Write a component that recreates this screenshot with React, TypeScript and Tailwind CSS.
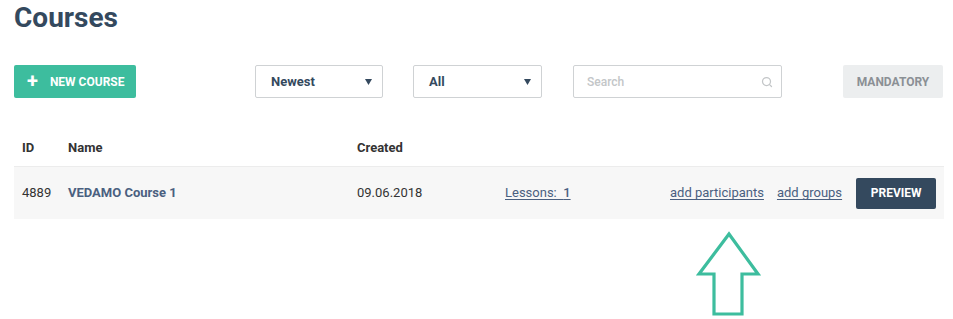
import { Search } from "lucide-react";

const Caret = () => (
  <svg width="7" height="6" viewBox="0 0 7 6" className="shrink-0">
    <path d="M0 0 H7 L3.5 6 Z" fill="#34495e" />
  </svg>
);

const Select = ({ label, width }: { label: string; width: string }) => (
  <div
    className={`${width} h-[33px] shrink-0 flex items-center justify-between pl-[15px] pr-[10px] border border-[#cfd2d4] rounded-[2px] bg-white`}
  >
    <span className="text-[13px] font-bold text-[#34495e]">{label}</span>
    <Caret />
  </div>
);

const App = () => {
  return (
    <div className="relative w-[953px] h-[319px] bg-white pl-[14px] pr-[9px] font-['Roboto',sans-serif] overflow-hidden">
      {/* Title */}
      <h1 className="pt-[1px] text-[28px] leading-[34px] font-bold text-[#34495e]">Courses</h1>

      {/* Toolbar */}
      <div className="mt-[30px] flex items-center">
        <button className="w-[122px] h-[33px] shrink-0 flex items-center pl-[13px] rounded-[2px] bg-[#3dbd9e] text-white">
          <span className="text-[20px] leading-none font-bold mr-[12px] -mt-[2px]">+</span>
          <span className="text-[12px] font-bold">NEW COURSE</span>
        </button>
        <div className="ml-[119px]">
          <Select label="Newest" width="w-[128px]" />
        </div>
        <div className="ml-[30px]">
          <Select label="All" width="w-[129px]" />
        </div>
        <div className="ml-[31px] w-[209px] h-[33px] shrink-0 flex items-center justify-between pl-[13px] pr-[8px] border border-[#cfd2d4] rounded-[2px]">
          <span className="text-[12px] font-medium text-[#c3c6c8]">Search</span>
          <Search size={12} strokeWidth={2.5} className="text-[#c3c6c8]" />
        </div>
        <button className="ml-[61px] w-[100px] h-[33px] shrink-0 flex items-center justify-center rounded-[2px] bg-[#eceeef] text-[12px] font-bold text-[#8b9095]">
          MANDATORY
        </button>
      </div>

      {/* Table */}
      <div className="mt-[31px] w-[930px] text-[13px]">
        <div className="h-[38px] flex items-center text-[#333] font-bold border-b border-[#ececec]">
          <div className="w-[54px] pl-[8px]">ID</div>
          <div className="w-[289px]">Name</div>
          <div>Created</div>
        </div>
        <div className="h-[52px] flex items-center bg-[#f7f7f7] text-[#333]">
          <div className="w-[54px] pl-[8px]">4889</div>
          <div className="w-[289px] font-bold text-[#4a6080]">VEDAMO Course 1</div>
          <div className="w-[148px]">09.06.2018</div>
          <div className="w-[165px] text-[#4a6080] underline underline-offset-2">
            Lessons:&nbsp; <span className="font-medium">1</span>
          </div>
          <div className="flex items-center gap-[13px] text-[#4a6080] underline underline-offset-2">
            <span>add participants</span>
            <span>add groups</span>
          </div>
          <button className="ml-[14px] w-[80px] h-[31px] rounded-[2px] bg-[#34495e] text-white text-[12px] font-bold">
            PREVIEW
          </button>
        </div>
      </div>

      {/* Annotation arrow */}
      <svg
        className="absolute left-[696px] top-[231px]"
        width="66"
        height="86"
        viewBox="0 0 66 86"
      >
        <path
          d="M33 3 L62 43 H46 V83 H18 V43 H3 Z"
          fill="none"
          stroke="#3dbd9e"
          strokeWidth="3.2"
          strokeLinejoin="miter"
        />
      </svg>
    </div>
  );
};

export default App;
